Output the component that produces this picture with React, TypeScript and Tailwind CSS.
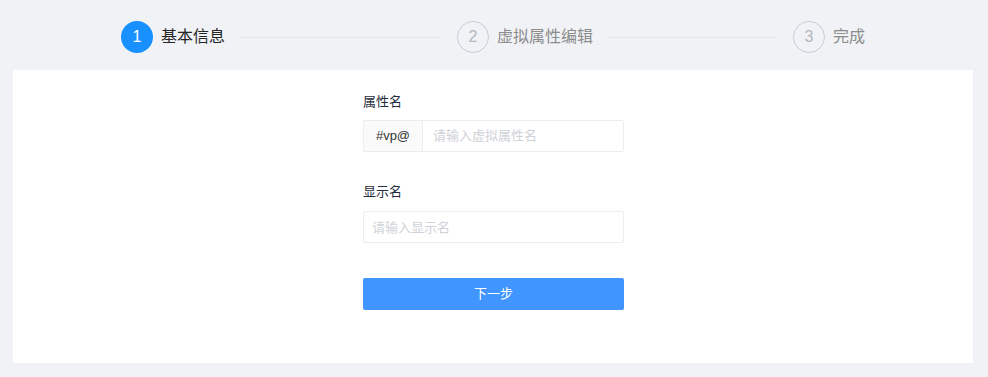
import React from "react";

const steps = [
    { n: 1, title: "基本信息" },
    { n: 2, title: "虚拟属性编辑" },
    { n: 3, title: "完成" },
];

const StepBar = ({ current }: { current: number }) => {
    return (
        <div className="flex items-center h-[70px] pt-1 pl-[108px]">
            {steps.map((s, i) => {
                const active = s.n === current;
                const last = i === steps.length - 1;
                return (
                    <div key={s.n} className={last ? "flex items-center" : "flex items-center w-[336px]"}>
                        <div
                            className={
                                active
                                    ? "w-8 h-8 rounded-full bg-[#1890ff] text-white flex items-center justify-center text-[16px]"
                                    : "w-8 h-8 rounded-full border border-[#c9ccd3] text-[#b4b7bd] flex items-center justify-center text-[16px]"
                            }
                        >
                            {s.n}
                        </div>
                        <span className={active ? "ml-2 text-[16px] text-[#262626]" : "ml-2 text-[16px] text-[#8c8c8c]"}>
                            {s.title}
                        </span>
                        {!last ? <div className="flex-1 h-px bg-[#e4e6ea] ml-[15px] mr-[17px]"></div> : null}
                    </div>
                );
            })}
        </div>
    );
};

export default function App() {
    return (
        <div
            className="w-[988px] h-[377px] bg-[#f0f2f5] pl-[13px] pr-[15px]"
            style={{ fontFamily: '"Liberation Sans", "Noto Sans CJK SC", sans-serif' }}
        >
            <StepBar current={1} />
            <div className="bg-white h-[293px] pt-[22px]">
                <div className="w-[261px] ml-[350px]">
                    <label className="block text-[13px] leading-5 text-[#1f2d3d]">属性名</label>
                    <div className="mt-2 flex h-8 border border-[#ebedf0] rounded-[2px]">
                        <span className="w-[59px] bg-[#fafafa] border-r border-[#ebedf0] flex items-center justify-center text-[13px] text-[#333]">
                            #vp@
                        </span>
                        <input
                            type="text"
                            className="flex-1 min-w-0 px-[10px] text-[13px] text-[#333] outline-none placeholder:text-[#cfd2d8]"
                            placeholder="请输入虚拟属性名"
                        />
                    </div>

                    <label className="block mt-[30px] text-[13px] leading-5 text-[#1f2d3d]">显示名</label>
                    <input
                        type="text"
                        className="mt-[9px] block w-full h-8 px-2 border border-[#ebedf0] rounded-[2px] text-[13px] outline-none placeholder:text-[#cfd2d8]"
                        placeholder="请输入显示名"
                    />

                    <button
                        type="button"
                        className="mt-[35px] w-full h-8 bg-[#4095ff] text-white text-[13px] rounded-[2px]"
                    >
                        下一步
                    </button>
                </div>
            </div>
        </div>
    );
}
